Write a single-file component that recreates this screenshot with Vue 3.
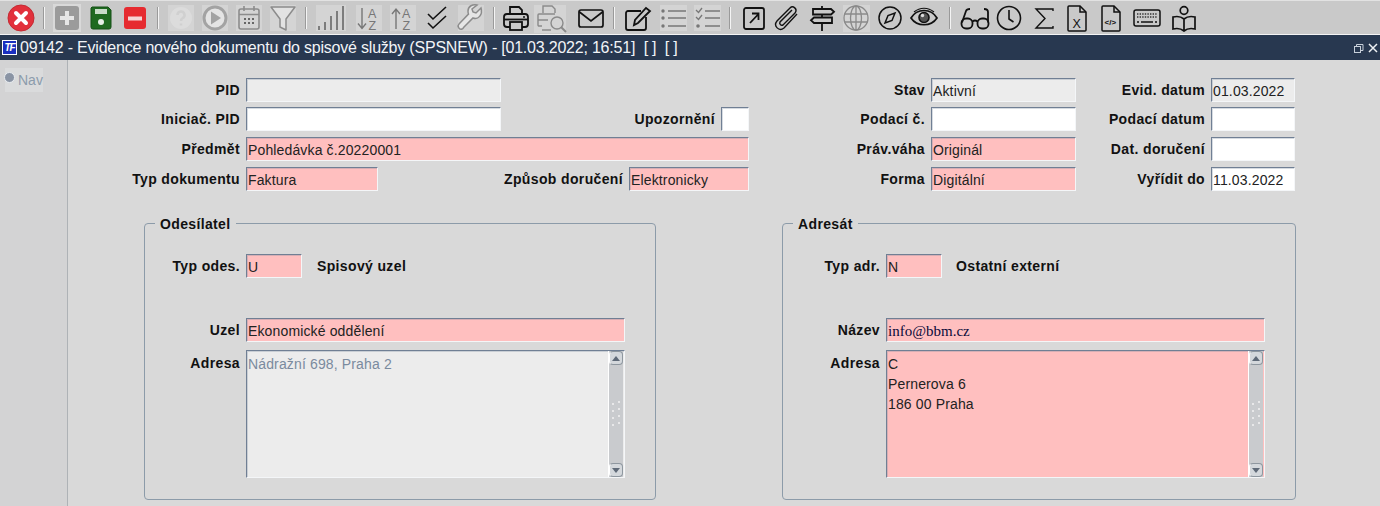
<script setup>
const G = '#8c8c8c'
const ic = {
  close: `<circle cx="16" cy="16" r="13" fill="#e2313c" stroke="#c42a33"/><path d="M11 11l10 10M21 11L11 21" stroke="#fff" stroke-width="4" stroke-linecap="round"/>`,
  plus: `<rect x="2" y="2" width="28" height="28" fill="#d9d9d9"/><rect x="4" y="4" width="24" height="24" rx="3" fill="#9b9b9b"/><path d="M16 9v14M9 16h14" stroke="#e6e6e6" stroke-width="4"/>`,
  save: `<path d="M7 5h16l3 3v17a2 2 0 0 1-2 2H8a2 2 0 0 1-2-2V6z" fill="#1f6a20" stroke="#165017"/><rect x="10" y="7" width="12" height="5" fill="#c8dcc8"/><circle cx="16" cy="20" r="3" fill="#e6efe6"/>`,
  minus: `<rect x="5" y="5" width="22" height="22" rx="3" fill="#e62b30"/><rect x="9" y="14.500" width="14" height="4" fill="#f5d5d5"/>`,
  help: `<rect x="3" y="3" width="26" height="26" fill="#d4d4d4"/><circle cx="16" cy="16" r="11" fill="#dcdcdc"/><path d="M12.500 13a3.500 3.500 0 1 1 5 3.200c-1 .6-1.500 1.200-1.500 2.800M16 21.500v2" fill="none" stroke="#d0d0d0" stroke-width="2.500"/>`,
  play: `<rect x="3" y="3" width="26" height="26" fill="#d4d4d4"/><circle cx="16" cy="16" r="11" fill="#e4e4e4" stroke="#a3a3a3" stroke-width="3"/><path d="M12 9.500l10 6.500-10 6.500z" fill="#a3a3a3"/>`,
  cal: `<rect x="3" y="3" width="26" height="26" fill="#d4d4d4"/><g fill="none" stroke="${G}" stroke-width="1.600"><rect x="6" y="7" width="20" height="20" rx="2"/><path d="M6 12.500h20M11 4v5M21 4v5"/></g><path d="M11 16h2v2h-2zM15 16h2v2h-2zM19 16h2v2h-2zM11 20h2v2h-2zM15 20h2v2h-2zM19 20h2v2h-2z" fill="#666"/>`,
  filter: `<rect x="3" y="3" width="26" height="26" fill="#d4d4d4"/><path d="M4 5h24L19 17v11l-6-3v-8z" fill="#e2e2e2" stroke="${G}" stroke-width="1.500" stroke-linejoin="round"/>`,
  bars: `<rect x="1" y="3" width="30" height="26" fill="#d4d4d4"/><path d="M4 28v-4M10 28v-8M16 28V14M22 28V9M28 28V4" stroke="#7d7d7d" stroke-width="2"/>`,
  azd: `<rect x="3" y="3" width="26" height="26" fill="#d4d4d4"/><path d="M9 6v20M5 21.500l4 5 4-5" fill="none" stroke="#777" stroke-width="1.400"/><text x="15" y="15.500" font-size="12.500" fill="#777" font-family="Liberation Sans">A</text><text x="15.500" y="28" font-size="12.500" fill="#777" font-family="Liberation Sans">Z</text>`,
  azu: `<rect x="3" y="3" width="26" height="26" fill="#d4d4d4"/><path d="M9 27V7M5 12l4-5 4 5" fill="none" stroke="#777" stroke-width="1.400"/><text x="15" y="15.500" font-size="12.500" fill="#777" font-family="Liberation Sans">A</text><text x="15.500" y="28" font-size="12.500" fill="#777" font-family="Liberation Sans">Z</text>`,
  check: `<path d="M7 12l5 5L25 5M7 21l5 5L25 14" fill="none" stroke="#111" stroke-width="1.600"/>`,
  wrench: `<rect x="3" y="3" width="26" height="26" fill="#d4d4d4"/><path d="M26 6l-5 5-3-1-1-3 5-4c-4-1-9 1-9 6 0 2 0 2 .5 3L4 22c-2 2 0 6 3 5 1 0 1-1 2-2l9-9c5 2 10-3 8-10z" fill="#e6e6e6" stroke="${G}" stroke-width="1.500"/>`,
  print: `<g fill="none" stroke="#111" stroke-width="1.800"><path d="M10 12V5h9l3 3v4M10 25H7a3 3 0 0 1-3-3v-7a3 3 0 0 1 3-3h18a3 3 0 0 1 3 3v7a3 3 0 0 1-3 3h-3"/><rect x="10" y="20" width="12" height="8"/><path d="M4 17.500h24"/></g><circle cx="24" cy="15" r="1" fill="#111"/>`,
  prev: `<rect x="-1" y="3" width="32" height="28" fill="#d4d4d4"/><g fill="none" stroke="#8a8a8a" stroke-width="1.400"><path d="M8 11V4h9l3 3v4M7 24H4a1 1 0 0 1-1-1V13a1 1 0 0 1 1-1h16M3 18h10M7 28h9"/><circle cx="22" cy="21" r="6"/><path d="M26 25l5 5" stroke-width="2"/></g>`,
  mail: `<g fill="none" stroke="#111" stroke-width="1.700"><rect x="4" y="8" width="24" height="17" rx="2"/><path d="M4.500 10L16 19 27.500 10"/></g>`,
  edit: `<g fill="none" stroke="#111" stroke-width="1.800"><path d="M20 9H7a2 2 0 0 0-2 2v15a2 2 0 0 0 2 2h16a2 2 0 0 0 2-2V15"/><path d="M13 23l1-5L25 6l4 3-12 12z"/></g>`,
  list: `<rect x="3" y="3" width="27" height="26" fill="#d4d4d4"/><path d="M11 9h18M11 16h18M11 24h18" stroke="#777" stroke-width="1.400"/><circle cx="6" cy="9" r="1.700" fill="#777"/><circle cx="6" cy="16" r="1.700" fill="#777"/><circle cx="6" cy="24" r="1.700" fill="#777"/>`,
  clist: `<rect x="3" y="3" width="27" height="26" fill="#d4d4d4"/><path d="M14 9h15M14 16h15M14 24h15" stroke="#777" stroke-width="1.400"/><path d="M5 8l2.500 2.500L11 6M5 15l2.500 2.500L11 13" fill="none" stroke="#777" stroke-width="1.300"/><circle cx="7" cy="24" r="1.800" fill="#777"/>`,
  arrow: `<g fill="none" stroke="#111" stroke-width="1.800"><rect x="6" y="6" width="20" height="21" rx="2"/><path d="M12 21l8.500-9M14 11.500h6.500V18"/></g>`,
  clip: `<path d="M25 12L12 26c-5 4-11-2-7-7L18 6c3-3 8 1 5 5L11 23c-2 1-4-1-3-3L20 8" fill="none" stroke="#111" stroke-width="1.400"/>`,
  sign: `<g fill="none" stroke="#111" stroke-width="1.800"><path d="M16 4v3M16 12.500v3M16 21v8"/><path d="M7 7h18l3 2.800-3 2.700H7zM26 15.500H8l-3 2.800 3 2.700h18z"/></g>`,
  globe: `<rect x="3" y="3" width="27" height="27" fill="#d4d4d4"/><g fill="none" stroke="#8a8a8a" stroke-width="1.300"><circle cx="16" cy="16" r="12"/><ellipse cx="16" cy="16" rx="5.500" ry="12"/><path d="M4.500 12h23M4.500 20h23M16 4v24"/></g>`,
  compass: `<g fill="none" stroke="#111" stroke-width="1.500"><circle cx="16" cy="16" r="11"/><path d="M21 11l-3 7.500-7 2.500 3-7.500z"/></g>`,
  eye: `<path d="M3 16c6-10 20-10 26 0-6 9-20 9-26 0z" fill="none" stroke="#111" stroke-width="1.700"/><path d="M6 10c6-5 14-5 20 0" fill="none" stroke="#111" stroke-width="1.200"/><circle cx="16" cy="15.500" r="5" fill="#555" stroke="#111" stroke-width="1.600"/><circle cx="14.500" cy="13.500" r="1.700" fill="#ddd"/>`,
  glass: `<g fill="none" stroke="#111" stroke-width="1.800"><rect x="2.500" y="16.500" width="11" height="10" rx="4.500"/><rect x="18.500" y="16.500" width="11" height="10" rx="4.500"/><path d="M13.500 19.500c1.500-1.200 3.500-1.200 5 0M3 20.500L7 9c.5-1.500 2.500-2 4-2M29 20.500V10c0-2-1.500-3-4-3"/></g>`,
  clock: `<g fill="none" stroke="#111" stroke-width="1.600"><circle cx="16" cy="16" r="11.500"/><path d="M16 8v9l4.500 3"/></g>`,
  sigma: `<path d="M25 9V7H8l9 9.500-9 9.500h17v-2" fill="none" stroke="#111" stroke-width="1.400"/>`,
  xls: `<g fill="none" stroke="#111" stroke-width="1.500"><path d="M8 4h11l6 6v18a1 1 0 0 1-1 1H8a1 1 0 0 1-1-1V5a1 1 0 0 1 1-1z"/><path d="M19 4v6h6"/></g><text x="11.500" y="25.500" font-size="12.500" fill="#111" font-family="Liberation Sans">X</text>`,
  code: `<g fill="none" stroke="#111" stroke-width="1.500"><path d="M8 4h11l6 6v18a1 1 0 0 1-1 1H8a1 1 0 0 1-1-1V5a1 1 0 0 1 1-1z"/><path d="M19 4v6h6"/></g><text x="9.500" y="22.500" font-size="8" font-weight="700" fill="#111" font-family="Liberation Sans">&lt;/&gt;</text>`,
  keys: `<rect x="3" y="8" width="26" height="16" rx="2" fill="none" stroke="#111" stroke-width="1.500"/><path d="M6 12h20M6 15h20" stroke="#333" stroke-width="1.400" stroke-dasharray="1.400 1.200"/><path d="M10 20h12" stroke="#111" stroke-width="1.500"/><path d="M6 20h2M24 20h2" stroke="#111" stroke-width="1.500"/>`,
  book: `<g fill="none" stroke="#111" stroke-width="1.700"><circle cx="16" cy="8.500" r="3.800"/><path d="M16 17c-3-2.500-7-3-11-2v12c4-1 8-.5 11 2 3-2.500 7-3 11-2V15c-4-1-8-.5-11 2zM16 17v12"/></g>`,
}
const raw = [
  ['close',21],['s',43.5],['plus',67],['save',101],['minus',135],['s',157.5],['help',181],['play',215],['cal',249],['filter',283],['s',305.5],
  ['bars',331],['azd',369],['azu',403],['check',437],['wrench',471],['s',494],['print',516],['prev',551],['mail',591],['s',614],['edit',637],
  ['list',673],['clist',707],['s',730],['arrow',754],['clip',788],['sign',822],['globe',856],['compass',890],['eye',924],['s',950],
  ['glass',975],['clock',1009],['sigma',1044],['xls',1077],['code',1111],['keys',1147],['book',1184],
]
let end = 0
const tools = raw.map(([n, c]) => {
  const w = n === 's' ? 2 : 32
  const gap = c - w / 2 - end
  end = c + w / 2
  return { n, gap, svg: ic[n] }
})
</script>

<template>
  <div class="app">
    <div class="toolbar">
      <template v-for="(t, i) in tools" :key="i">
        <span v-if="t.n === 's'" class="sep" :style="{ marginLeft: t.gap + 'px' }"></span>
        <svg v-else class="tool" viewBox="0 0 32 32" :style="{ marginLeft: t.gap + 'px' }" v-html="t.svg"></svg>
      </template>
    </div>
    <div class="titlebar">
      <span class="logo">TF</span>
      <span class="title">09142 - Evidence nového dokumentu do spisové služby (SPSNEW) - [01.03.2022; 16:51]&nbsp; [ ]&nbsp; [ ]</span>
      <svg class="winbtn" width="26" height="14" viewBox="0 0 26 14">
        <g fill="none" stroke="#c8d0da"><rect x="1.500" y="5.500" width="6" height="6"/><path d="M3.500 5V3.500h6.500v6H8"/></g>
        <path d="M16 3l8 8M24 3l-8 8" stroke="#eef1f4" stroke-width="1.500"/>
      </svg>
    </div>
    <div class="body">
      <div class="nav">
        <div class="navitem"><span class="radio"></span><span>Nav</span></div>
      </div>
      <div class="main">
        <div class="top">
          <div class="col-left">
            <div class="row">
              <label class="lab l172">PID</label><div class="fld dis w255"></div>
            </div>
            <div class="row">
              <label class="lab l172">Iniciač. PID</label><div class="fld w255"></div>
              <label class="lab l215">Upozornění</label><div class="fld w28"></div>
            </div>
            <div class="row">
              <label class="lab l172">Předmět</label><div class="fld req w503">Pohledávka č.20220001</div>
            </div>
            <div class="row">
              <label class="lab l172">Typ dokumentu</label><div class="fld req w132">Faktura</div>
              <label class="lab l245">Způsob doručení</label><div class="fld req w120">Elektronicky</div>
            </div>
          </div>
          <div class="col-right">
            <div class="row">
              <label class="lab l176">Stav</label><div class="fld dis w145">Aktivní</div>
              <label class="lab l129">Evid. datum</label><div class="fld dis w84">01.03.2022</div>
            </div>
            <div class="row">
              <label class="lab l176">Podací č.</label><div class="fld w145"></div>
              <label class="lab l129">Podací datum</label><div class="fld w84"></div>
            </div>
            <div class="row">
              <label class="lab l176">Práv.váha</label><div class="fld req w145">Originál</div>
              <label class="lab l129">Dat. doručení</label><div class="fld w84"></div>
            </div>
            <div class="row">
              <label class="lab l176">Forma</label><div class="fld req w145">Digitální</div>
              <label class="lab l129">Vyřídit do</label><div class="fld w84">11.03.2022</div>
            </div>
          </div>
        </div>

        <div class="groups">
          <section class="group g-left">
            <h3 class="legend">Odesílatel</h3>
            <div class="grow r1">
              <label class="lab l95">Typ odes.</label><div class="fld req w56">U</div>
              <span class="lab desc">Spisový uzel</span>
            </div>
            <div class="grow r2">
              <label class="lab l95">Uzel</label><div class="fld req w379">Ekonomické oddělení</div>
            </div>
            <div class="grow r3">
              <label class="lab l95 top-lab">Adresa</label>
              <div class="fld dis w379 area muted">
                <div class="txt">Nádražní 698, Praha 2</div>
                <div class="sb">
                  <div class="sbbtn"><i class="up"></i></div>
                  <div class="grip"><b v-for="n in 8" :key="n"></b></div>
                  <div class="sbbtn"><i class="down"></i></div>
                </div>
              </div>
            </div>
          </section>
          <section class="group g-right">
            <h3 class="legend">Adresát</h3>
            <div class="grow r1">
              <label class="lab l97">Typ adr.</label><div class="fld req w56">N</div>
              <span class="lab desc d2">Ostatní externí</span>
            </div>
            <div class="grow r2">
              <label class="lab l97">Název</label><div class="fld req w379 serif">info@bbm.cz</div>
            </div>
            <div class="grow r3">
              <label class="lab l97 top-lab">Adresa</label>
              <div class="fld req w379 area">
                <div class="txt">C<br>Pernerova 6<br>186 00 Praha</div>
                <div class="sb">
                  <div class="sbbtn"><i class="up"></i></div>
                  <div class="grip"><b v-for="n in 8" :key="n"></b></div>
                  <div class="sbbtn"><i class="down"></i></div>
                </div>
              </div>
            </div>
          </section>
        </div>
      </div>
    </div>
  </div>
</template>

<style scoped>
.app { width: 1380px; height: 506px; overflow: hidden; background: #d9d9d9; font-family: "Liberation Sans", Arial, sans-serif; font-size: 14px; color: #111; display: flex; flex-direction: column; }
.toolbar { height: 33px; flex: none; display: flex; align-items: center; background: #c9c9c9; border-top: 1px solid #e2e2e2; border-bottom: 1px solid #f4f4f4; box-sizing: content-box; }
.tool { width: 32px; height: 32px; flex: none; overflow: visible; }
.sep { width: 2px; height: 22px; flex: none; background: #f4f4f4; border-left: 1px solid #9a9a9a; box-sizing: border-box; }
.titlebar { height: 25px; flex: none; background: #283850; color: #f2f4f7; display: flex; align-items: center; font-size: 16px; padding: 0 1px 0 2px; }
.logo { width: 15px; height: 15px; background: #1a2fc0; border: 1px solid #fff; box-sizing: border-box; color: #fff; font: italic 700 10px/13px "Liberation Sans", sans-serif; text-align: center; flex: none; letter-spacing: -1px; }
.title { margin-left: 3px; flex: 1; white-space: nowrap; letter-spacing: -0.21px; }
.winbtn { flex: none; }
.body { flex: 1; display: flex; min-height: 0; }
.nav { width: 67px; flex: none; background: #d3d3d4; border-right: 1px solid #aeb2b6; padding-top: 8px; }
.navitem { margin-left: 5px; width: 38px; height: 24px; background: #dadbdc; display: flex; align-items: center; color: #8c9cac; font-size: 14px; }
.radio { width: 9px; height: 9px; border-radius: 50%; background: #8a94a4; border: 1px solid #e8ecf0; margin: 0 3px 6px -1px; flex: none; }
.main { flex: 1; padding-top: 18px; }
.top { display: flex; }
.col-left { width: 681px; flex: none; }
.col-left, .col-right { display: flex; flex-direction: column; gap: 6px; }
.row { display: flex; height: 24px; align-items: center; }
.col-left .row:first-child, .col-right .row:first-child { margin-bottom: -1px; }
.lab { font-weight: 700; font-size: 14px; color: #111; text-align: right; flex: none; padding-right: 6px; box-sizing: border-box; white-space: nowrap; letter-spacing: 0.36px; }
.l172 { width: 178px; }
.l215 { width: 220px; }
.l245 { width: 251px; }
.l176 { width: 182px; }
.l129 { width: 135px; }
.l95 { width: 101px; }
.l97 { width: 103px; }
.fld { height: 24px; box-sizing: border-box; background: #fff; border: 1px solid; border-color: #707f94 #f4f6f8 #f4f6f8 #707f94; padding-left: 1px; line-height: 24px; color: #222; font-size: 14px; letter-spacing: 0.14px; flex: none; white-space: nowrap; overflow: hidden; box-shadow: inset 1px 1px 0 rgba(120,135,155,.3); }
.dis { background: #ececec; }
.req { background: #ffbfbf; }
.w255 { width: 255px; }
.w28 { width: 28px; }
.w503 { width: 503px; }
.w132 { width: 132px; }
.w120 { width: 120px; }
.w145 { width: 145px; }
.w84 { width: 84px; }
.w56 { width: 56px; }
.w379 { width: 379px; }
.groups { display: flex; margin: 32px 0 0 76px; gap: 126px; }
.group { position: relative; height: 277px; box-sizing: border-box; border: 1px solid #8c9ba9; border-radius: 4px; padding-top: 30px; }
.g-left { width: 512px; }
.g-right { width: 514px; }
.legend { position: absolute; left: 10px; top: -8px; margin: 0; padding: 0 5px; background: #d9d9d9; font-size: 14px; font-weight: 700; line-height: 16px; letter-spacing: 0.36px; }
.grow { display: flex; align-items: center; height: 24px; }
.desc { margin-left: 15px; padding: 0; }
.d2 { margin-left: 14px; }
.r2 { margin-top: 40px; }
.r3 { margin-top: 8px; height: 128px; align-items: flex-start; }
.top-lab { margin-top: 5px; }
.area { height: 128px; display: flex; padding: 0 0 0 1px; }
.txt { flex: 1; line-height: 20px; padding-top: 3px; white-space: normal; }
.muted .txt { color: #7a8a9e; }
.serif { font-family: "Liberation Serif", serif; font-size: 15px; letter-spacing: 0; color: #0a0a3a; }
.sb { width: 15px; flex: none; background: #c9cbce; margin-right: 1px; border-left: 1px solid #fff; display: flex; flex-direction: column; justify-content: space-between; align-items: stretch; box-sizing: border-box; }
.sbbtn { height: 14px; background: #d4d8dc; border-radius: 4px; border: 1px solid #8e979f; border-left-color: #fff; display: flex; align-items: center; justify-content: center; box-sizing: border-box; }
.sbbtn i { width: 0; height: 0; border-left: 4px solid transparent; border-right: 4px solid transparent; }
.up { border-bottom: 5px solid #5f6a78; }
.down { border-top: 5px solid #5f6a78; }
.grip { display: grid; grid-template-columns: 2px 2px; column-gap: 4px; row-gap: 5px; justify-content: center; }
.grip b { width: 2px; height: 2px; border-radius: 50%; background: #f2f2f2; }
.grip b:nth-child(even) { transform: translateY(-2px); }
</style>
